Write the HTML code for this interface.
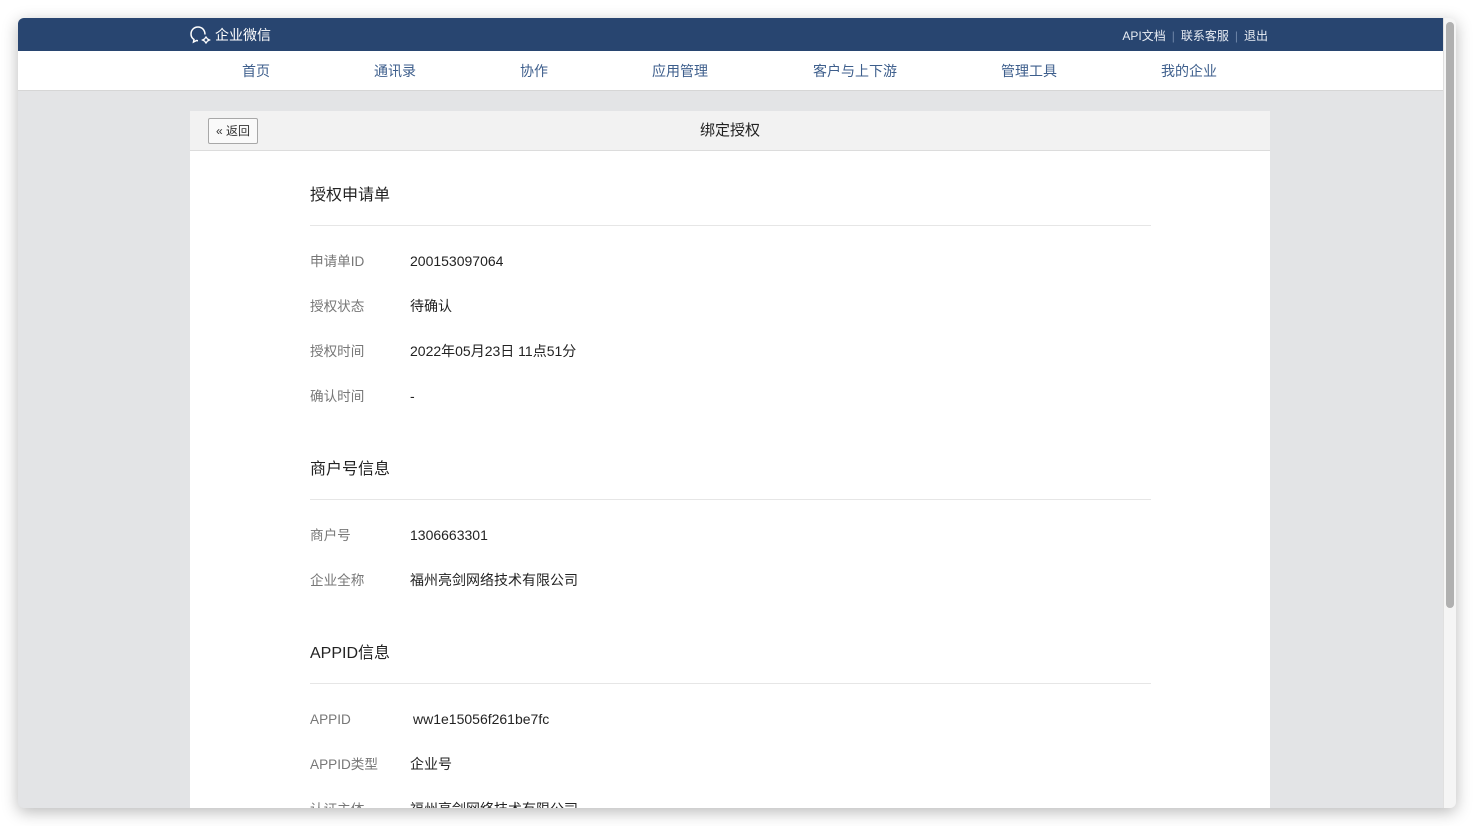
<!DOCTYPE html>
<html><head><meta charset="utf-8"><style>
*{margin:0;padding:0;box-sizing:border-box}
body{width:1474px;height:826px;background:#fff;font-family:"Liberation Sans","Noto Sans CJK SC",sans-serif;position:relative;overflow:hidden}
.win{position:absolute;left:18px;top:18px;width:1438px;height:790px;border-radius:6px;overflow:hidden;background:#e3e4e6;box-shadow:0 4px 16px rgba(0,0,0,.28)}
.top{position:absolute;left:0;top:0;width:1425px;height:33px;background:#284570;color:#fff}
.logo{position:absolute;left:172px;top:7px;font-size:14px;display:flex;align-items:center;gap:3px}
.links{position:absolute;right:175px;top:9px;font-size:12px;color:#e8edf4}
.links .s{color:#6f86a8;margin:0 6px}
.nav{position:absolute;left:0;top:33px;width:1425px;height:40px;background:#fff;border-bottom:1px solid #d6d6d6}
.nav span{position:absolute;top:10px;font-size:14px;color:#3d5e8c}
.sb{position:absolute;right:0;top:0;width:13px;height:790px;background:#f5f5f5;border-left:1px solid #e0e0e0}
.sb i{position:absolute;left:2px;top:4px;width:8px;height:586px;background:#b0b0b0;border-radius:4px}
.card{position:absolute;left:172px;top:93px;width:1080px;height:720px;background:#fff;border-radius:3px 3px 0 0}
.ch{height:40px;background:#f2f2f2;border-bottom:1px solid #dcdcdc;text-align:center;line-height:40px;font-size:15px;color:#222;position:relative}
.back{position:absolute;left:18px;top:7px;width:50px;height:26px;border:1px solid #a8a8a8;background:#fafafa;font-size:12px;line-height:24px;text-align:center;color:#333;border-radius:2px}
.sec{position:absolute;left:120px;font-size:16px;color:#222;line-height:20px}
.hr{position:absolute;left:120px;width:841px;height:1px;background:#e6e6e6}
.l{position:absolute;left:120px;font-size:13.6px;color:#777;line-height:18px;margin-top:1px}
.v{position:absolute;left:220px;font-size:14px;color:#222;line-height:18px}
</style></head><body>
<div class="win">
<div class="top">
<div class="logo"><svg width="22" height="20" viewBox="0 0 22 20"><path d="M15 9.5C15 5 12 2 8 2S1 5 1 9c0 2.5 1.2 4.3 3 5.5L3.5 17l3-1.5c.5.1 1 .2 1.5.2" fill="none" stroke="#fff" stroke-width="1.5"/><path d="M16 12l1.5 2 2 1-2 1-1.5 2-1.5-2-2-1 2-1z" fill="none" stroke="#fff" stroke-width="1.3"/></svg>企业微信</div>
<div class="links">API文档<span class="s">|</span>联系客服<span class="s">|</span>退出</div>
</div>
<div class="nav">
<span style="left:224px">首页</span><span style="left:356px">通讯录</span><span style="left:502px">协作</span><span style="left:634px">应用管理</span><span style="left:795px">客户与上下游</span><span style="left:983px">管理工具</span><span style="left:1143px">我的企业</span>
</div>
<div class="card">
<div class="ch"><div class="back">« 返回</div>绑定授权</div>
<div class="sec" style="top:75px">授权申请单</div><div class="hr" style="top:114px"></div>
<div class="l" style="top:141px">申请单ID</div><div class="v" style="top:141px">200153097064</div>
<div class="l" style="top:186px">授权状态</div><div class="v" style="top:186px">待确认</div>
<div class="l" style="top:231px">授权时间</div><div class="v" style="top:231px">2022年05月23日 11点51分</div>
<div class="l" style="top:276px">确认时间</div><div class="v" style="top:276px">-</div>
<div class="sec" style="top:349px">商户号信息</div><div class="hr" style="top:388px"></div>
<div class="l" style="top:415px">商户号</div><div class="v" style="top:415px">1306663301</div>
<div class="l" style="top:460px">企业全称</div><div class="v" style="top:460px">福州亮剑网络技术有限公司</div>
<div class="sec" style="top:533px">APPID信息</div><div class="hr" style="top:572px"></div>
<div class="l" style="top:599px">APPID</div><div class="v" style="top:599px;left:223px">ww1e15056f261be7fc</div>
<div class="l" style="top:644px">APPID类型</div><div class="v" style="top:644px">企业号</div>
<div class="l" style="top:689px">认证主体</div><div class="v" style="top:689px">福州亮剑网络技术有限公司</div>
</div>
<div class="sb"><i></i></div>
</div>
</body></html>
